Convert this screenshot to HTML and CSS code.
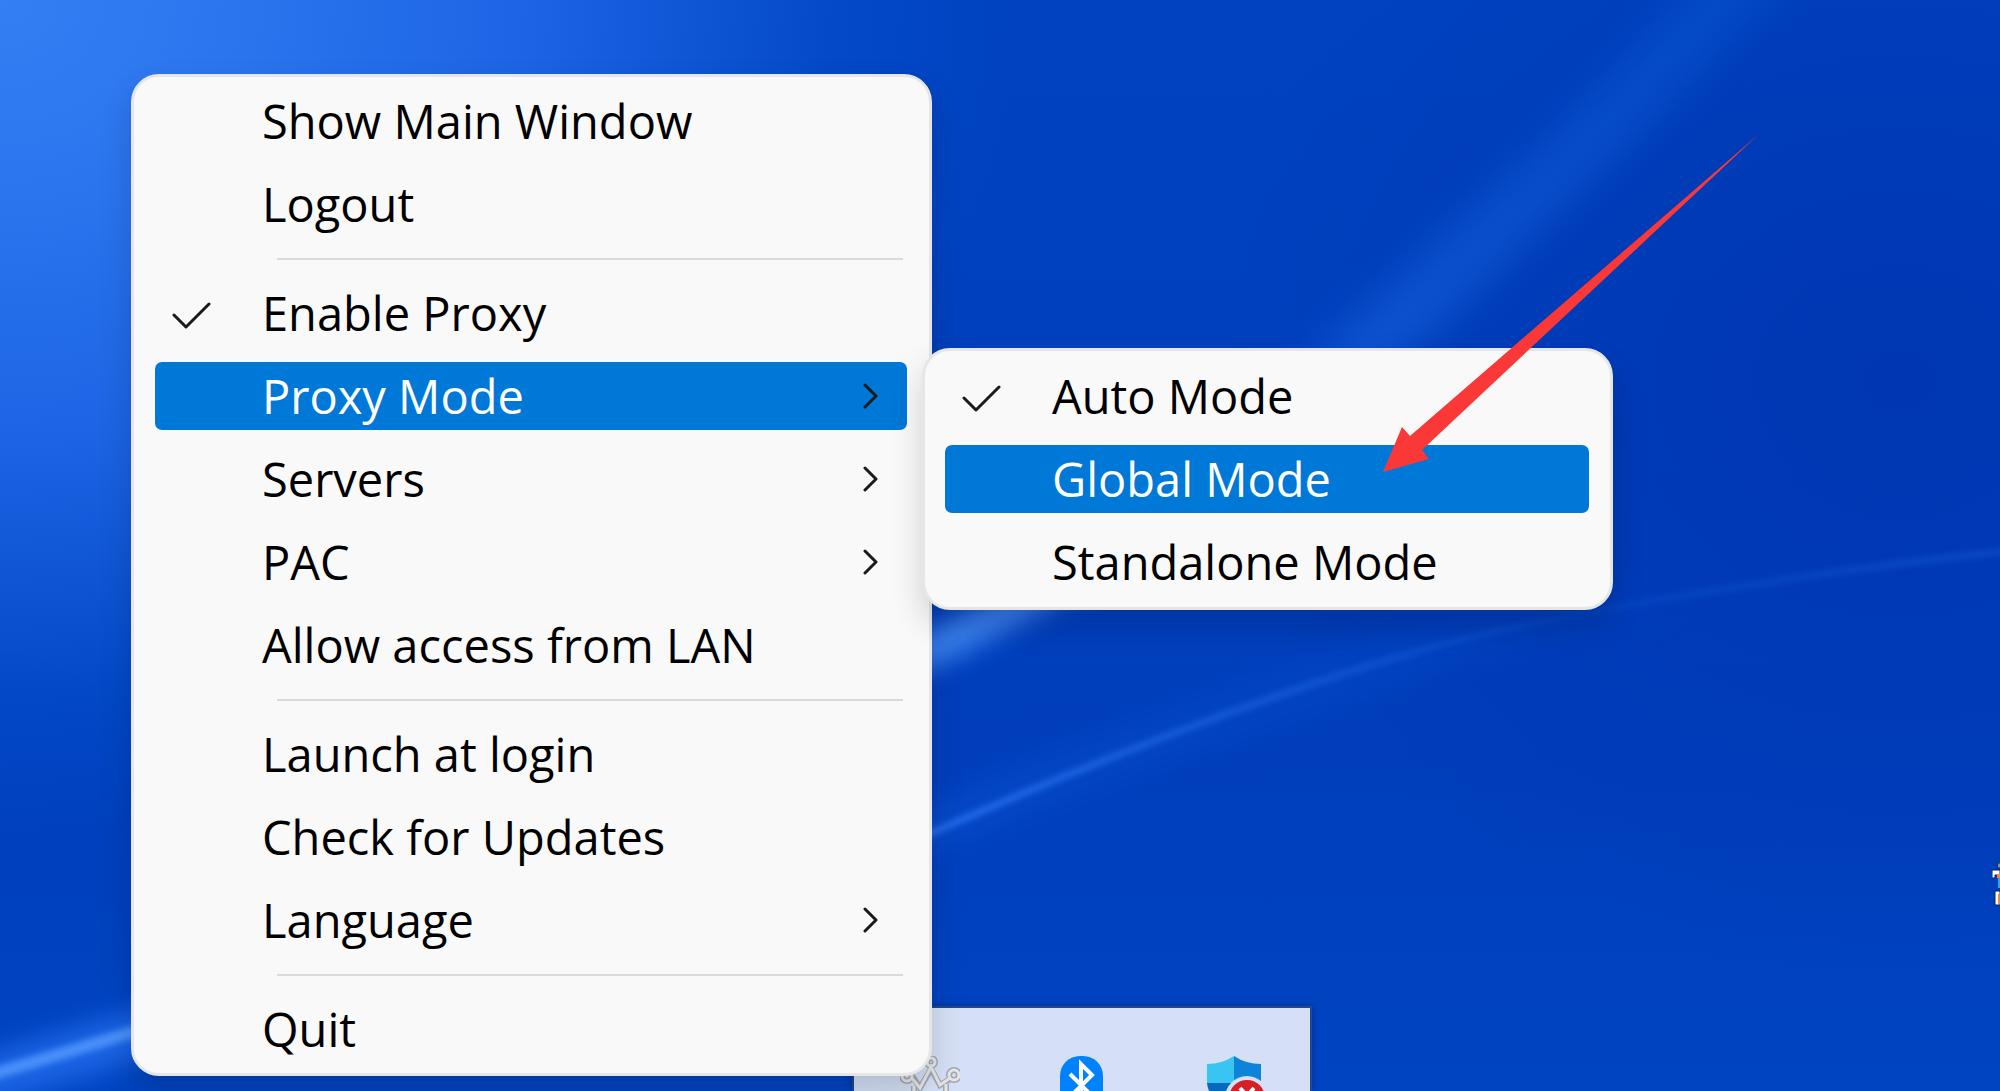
FILE: index.html
```
<!DOCTYPE html>
<html lang="en">

	<head>
		<meta charset="UTF-8" />
		<title>Proxy Menu</title>
		<link rel="stylesheet" href="styles.css">
	</head>

	<body>
		<svg class="wallpaper" viewBox="0 0 2000 1091" preserveAspectRatio="none" aria-hidden="true">
			<defs>
				<filter id="soft" x="-20%" y="-20%" width="140%" height="140%" color-interpolation-filters="sRGB"><feGaussianBlur stdDeviation="22" /></filter>
				<filter id="mid" x="-20%" y="-20%" width="140%" height="140%" color-interpolation-filters="sRGB"><feGaussianBlur stdDeviation="12" /></filter>
				<filter id="thin" x="-20%" y="-20%" width="140%" height="140%" color-interpolation-filters="sRGB"><feGaussianBlur stdDeviation="3" /></filter>
				<linearGradient id="fade" gradientUnits="userSpaceOnUse" x1="931" y1="0" x2="2000" y2="0">
					<stop offset="0" stop-color="#2a72f0" />
					<stop offset="0.35" stop-color="#1458d6" />
					<stop offset="0.6" stop-color="#0444c0" />
					<stop offset="1" stop-color="#0c4cc8" />
				</linearGradient>
				<linearGradient id="glow" gradientUnits="userSpaceOnUse" x1="931" y1="0" x2="1700" y2="0">
					<stop offset="0" stop-color="#0a50d0" />
					<stop offset="1" stop-color="#0a50d0" stop-opacity="0" />
				</linearGradient>
				<linearGradient id="beam" gradientUnits="userSpaceOnUse" x1="1300" y1="360" x2="1780" y2="0">
					<stop offset="0" stop-color="#1c66e2" />
					<stop offset="1" stop-color="#0652d0" />
				</linearGradient>
			</defs>
			<path d="M1260 410 L1560 130 L1760 -80 L1840 -80 L1620 150 L1390 370 L1340 410 Z" fill="url(#beam)" opacity="0.6" filter="url(#soft)" />
			<path d="M880 690 L880 655 L1010 590 L1120 570 L960 655 Z" fill="#3a80ee" filter="url(#mid)" />
			<path d="M900 842 C1150 735 1340 675 1440 648 S1800 575 2010 548" fill="none" stroke="url(#glow)" stroke-width="50" opacity="0.5" filter="url(#mid)" />
			<path d="M920 838 C1150 735 1340 672 1440 645 S1800 572 2010 551" fill="none" stroke="url(#fade)" stroke-width="6" filter="url(#thin)" />
			<path d="M-60 1094 L220 1010" fill="none" stroke="#1a64e4" stroke-width="50" filter="url(#mid)" />
			<path d="M-60 1090 L220 1006" fill="none" stroke="#4a90fa" stroke-width="12" filter="url(#thin)" />
		</svg>

		<div class="tray">
			<svg class="tray-icon" viewBox="0 0 60 60">
				<g fill="none" stroke="#a3a8b2" stroke-width="6">
					<path d="M13 21 L20 32 L31 13 L40 29 L50 23" />
					<circle cx="31" cy="6" r="4" />
					<circle cx="7" cy="20" r="5" />
					<circle cx="54" cy="19" r="5" />
					<path d="M14 30 V42 H46 V28" />
				</g>
				<g fill="none" stroke="#e6e6e6" stroke-width="3">
					<path d="M11 21 L20 32 L31 11 L40 29 L50 22" />
					<circle cx="31" cy="6" r="4" />
					<circle cx="7" cy="20" r="5" />
					<circle cx="54" cy="19" r="5" />
					<path d="M14 30 V42 H46 V28" />
				</g>
			</svg>
			<svg class="tray-icon" viewBox="0 0 60 60">
				<rect x="8" y="0" width="43" height="58" rx="20" fill="#0082fc" />
				<path d="M18 18 L40 40 L29 50 V8 L40 19 L18 41" fill="none" stroke="#fff" stroke-width="4" />
			</svg>
			<svg class="tray-icon" viewBox="0 0 60 60">
				<path d="M3 8 Q18 8 30 0 V28 H3 Z" fill="#39c5f1" />
				<path d="M57 8 Q42 8 30 0 V28 H57 Z" fill="#0d84d8" />
				<path d="M3 27 H30 V58 Q5 46 3 27 Z" fill="#0669bb" />
				<path d="M30 27 H57 Q55 46 30 58 Z" fill="#0b5aa5" />
				<circle cx="43" cy="42" r="22" fill="#d5e0f6" />
				<circle cx="43" cy="42" r="18" fill="#d71f27" />
				<path d="M36 32 L50 48 M50 32 L36 48" stroke="#fff" stroke-width="4" />
			</svg>
		</div>

		<svg class="edge-icon" viewBox="0 0 8 48" aria-hidden="true">
			<path d="M6 0 H8 V5 H6 Z M0 7 H8 V12 H3 V15 H0 Z M3 28 H8 V42 H3 Z" fill="#fff" stroke="#0b2350" />
			<path d="M5 11 H8 V15 H5 Z M6 31 H8 V41 H6 Z" fill="#f08a3a" />
			<path d="M6 15 H8 V25 H6 Z" fill="#2fa4e8" />
		</svg>

		<ul class="menu main-menu" role="menu">
			<li><button class="item" role="menuitem">Show Main Window</button></li>
			<li><button class="item" role="menuitem">Logout</button></li>
			<li class="line" role="separator"></li>
			<li>
				<button class="item" role="menuitemcheckbox" aria-checked="true">
					<svg class="check" viewBox="0 0 40 28"><path d="M2 14 L14 26 L37 3" /></svg>
					Enable Proxy
				</button>
			</li>
			<li>
				<button class="item active" role="menuitem" aria-haspopup="true" aria-expanded="true">
					Proxy Mode
					<svg class="chevron" viewBox="0 0 16 26"><path d="M2 2 L13 13 L2 24" /></svg>
				</button>
				<ul class="menu sub-menu" role="menu">
					<li>
						<button class="item" role="menuitemradio" aria-checked="true">
							<svg class="check" viewBox="0 0 40 28"><path d="M2 14 L14 26 L37 3" /></svg>
							Auto Mode
						</button>
					</li>
					<li><button class="item active" role="menuitemradio" aria-checked="false">Global Mode</button></li>
					<li><button class="item" role="menuitemradio" aria-checked="false">Standalone Mode</button></li>
				</ul>
			</li>
			<li>
				<button class="item" role="menuitem" aria-haspopup="true">
					Servers
					<svg class="chevron" viewBox="0 0 16 26"><path d="M2 2 L13 13 L2 24" /></svg>
				</button>
			</li>
			<li>
				<button class="item" role="menuitem" aria-haspopup="true">
					PAC
					<svg class="chevron" viewBox="0 0 16 26"><path d="M2 2 L13 13 L2 24" /></svg>
				</button>
			</li>
			<li><button class="item" role="menuitem">Allow access from LAN</button></li>
			<li class="line" role="separator"></li>
			<li><button class="item" role="menuitem">Launch at login</button></li>
			<li><button class="item" role="menuitem">Check for Updates</button></li>
			<li>
				<button class="item" role="menuitem" aria-haspopup="true">
					Language
					<svg class="chevron" viewBox="0 0 16 26"><path d="M2 2 L13 13 L2 24" /></svg>
				</button>
			</li>
			<li class="line" role="separator"></li>
			<li><button class="item" role="menuitem">Quit</button></li>
		</ul>

		<svg class="arrow" viewBox="0 0 376 338" aria-hidden="true">
			<path d="M0 338 L19 293 L27 302 L376 0 L39 316 L46 325 Z" fill="#fb3838" />
		</svg>
	</body>

</html>
```

FILE: styles.css
```
body,
ul {
	margin: 0;
	padding: 0;
}

li {
	list-style: none;
}

body {
	position: relative;
	height: 100vh;
	overflow: hidden;
	font-family: "Open Sans", "Noto Sans", sans-serif;
	background:
		radial-gradient(ellipse 1020px 850px at 0 0, #357ff4 0%, #2a74ee 25%, rgba(30, 102, 230, 0.95) 52%, rgba(4, 76, 204, 0.7) 82%, rgba(0, 66, 194, 0) 100%),
		radial-gradient(ellipse 700px 600px at 95% 35%, #0036b2 0%, rgba(0, 54, 178, 0) 100%),
		linear-gradient(#0042c0 0%, #003ebc 70%, #0044c2 100%);
}

.wallpaper {
	position: absolute;
	top: 0;
	left: 0;
	width: 100%;
	height: 100%;
}

/* menus */
.menu {
	position: absolute;
	box-sizing: border-box;
	display: flex;
	flex-direction: column;
	gap: 15px;
	border: 3px solid #e6e6e6;
	border-radius: 28px;
	background: #f9f9f9;
	box-shadow: 0 16px 32px rgba(0, 0, 0, 0.16);
}

.main-menu {
	top: 74px;
	left: 131px;
	width: 801px;
	padding: 10px 22px 10px 21px;
}

.menu li {
	position: relative;
}

.sub-menu {
	top: -14px;
	left: calc(100% + 15px);
	width: 691px;
	padding: 11px 21px 11px 20px;
}

.item {
	position: relative;
	display: flex;
	align-items: center;
	box-sizing: border-box;
	width: 100%;
	height: 68px;
	padding: 0 28px 0 107px;
	border: none;
	border-radius: 7px;
	background: none;
	color: #000;
	font-family: inherit;
	font-size: 47px;
	line-height: 68px;
	white-space: nowrap;
}

.active {
	background: #0078d7;
	color: #fff;
}

.menu .line {
	height: 2px;
	margin: 5px 4px 4px 122px;
	background: #dadada;
}

.check,
.chevron {
	fill: none;
	stroke: #1a1a1a;
	stroke-width: 3;
	stroke-linecap: round;
	stroke-linejoin: round;
}

.check {
	position: absolute;
	top: 22px;
	left: 17px;
	width: 40px;
	height: 28px;
}

.chevron {
	width: 16px;
	height: 26px;
	margin-left: auto;
}

/* tray flyout */
.tray {
	position: absolute;
	bottom: 0;
	left: 852px;
	display: flex;
	gap: 92px;
	box-sizing: border-box;
	width: 460px;
	height: 85px;
	padding: 48px 0 0 46px;
	border: 2px solid #1f4796;
	border-bottom: none;
	background: #d5e0f6;
	overflow: hidden;
	box-shadow: 0 0 8px rgba(0, 0, 0, 0.3);
}

.tray-icon {
	flex: none;
	width: 60px;
	height: 60px;
}

.edge-icon {
	position: absolute;
	top: 863px;
	right: 0;
	width: 8px;
	height: 48px;
}

.arrow {
	position: absolute;
	top: 134px;
	left: 1383px;
	width: 376px;
	height: 338px;
}
```
